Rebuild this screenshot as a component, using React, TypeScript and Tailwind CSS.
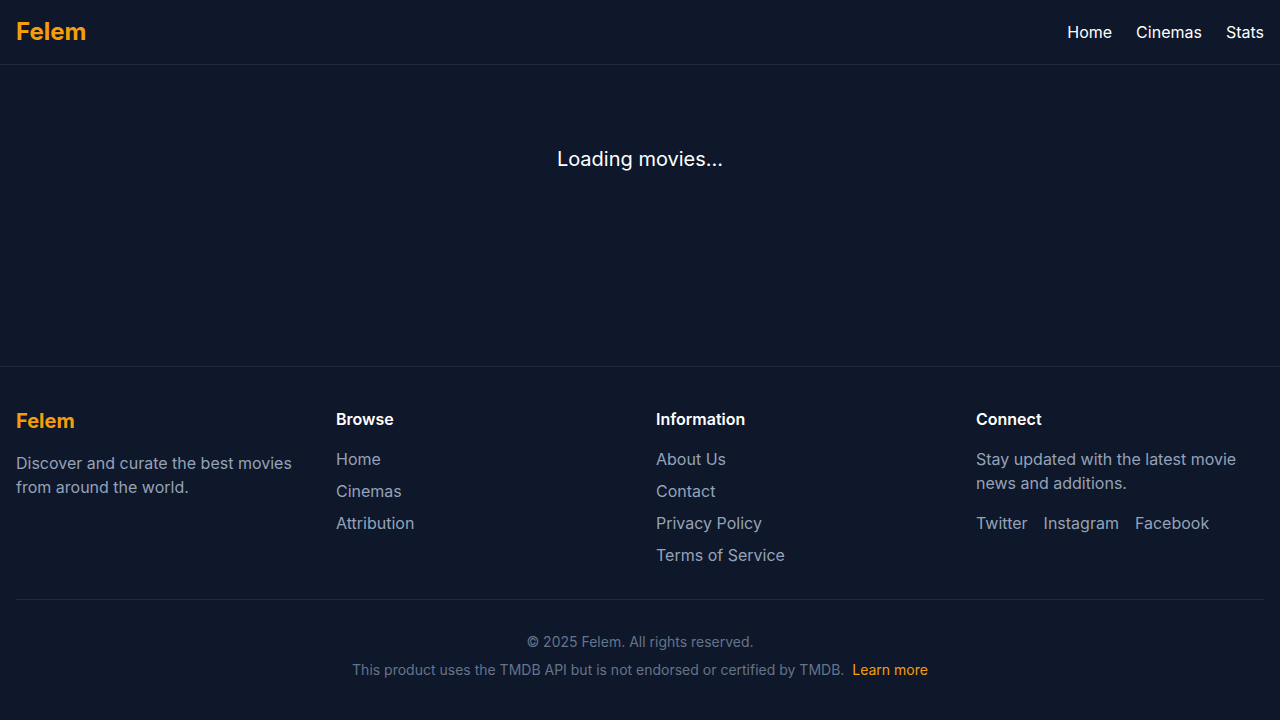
import React from "react";

export default function App() {
  return (
    <div
      className="min-h-screen bg-[#0f172a] text-white"
      style={{ fontFamily: "Inter, 'Noto Sans', sans-serif" }}
    >
      <header className="border-b border-[#1e293b] px-4 py-4 flex items-center justify-between">
        <div className="text-2xl font-bold text-[#f59e0b]">Felem</div>
        <nav className="flex items-center gap-6 text-base text-white">
          <a>Home</a>
          <a>Cinemas</a>
          <a>Stats</a>
        </nav>
      </header>
      <main className="h-[301px] pt-20 text-center">
        <p className="text-xl">Loading movies...</p>
      </main>
      <footer className="border-t border-[#1e293b] px-4 pt-10 pb-10">
        <div className="grid grid-cols-4 gap-8">
          <div>
            <div className="text-xl font-bold text-[#f59e0b] mb-4">Felem</div>
            <p className="text-base text-[#94a3b8]">
              Discover and curate the best movies from around the world.
            </p>
          </div>
          <div>
            <h3 className="text-base font-semibold mb-4">Browse</h3>
            <ul className="space-y-2 text-[#94a3b8]">
              <li>Home</li>
              <li>Cinemas</li>
              <li>Attribution</li>
            </ul>
          </div>
          <div>
            <h3 className="text-base font-semibold mb-4">Information</h3>
            <ul className="space-y-2 text-[#94a3b8]">
              <li>About Us</li>
              <li>Contact</li>
              <li>Privacy Policy</li>
              <li>Terms of Service</li>
            </ul>
          </div>
          <div>
            <h3 className="text-base font-semibold mb-4">Connect</h3>
            <p className="text-[#94a3b8]">
              Stay updated with the latest movie news and additions.
            </p>
            <div className="mt-4 flex gap-4 text-[#94a3b8]">
              <a>Twitter</a>
              <a>Instagram</a>
              <a>Facebook</a>
            </div>
          </div>
        </div>
        <div className="mt-8 border-t border-[#1e293b] pt-8 text-center text-sm text-[#64748b]">
          <p>© 2025 Felem. All rights reserved.</p>
          <p className="mt-2">
            This product uses the TMDB API but is not endorsed or certified by TMDB.{" "}
            <a className="ml-1 text-[#f59e0b]">Learn more</a>
          </p>
        </div>
      </footer>
    </div>
  );
}
